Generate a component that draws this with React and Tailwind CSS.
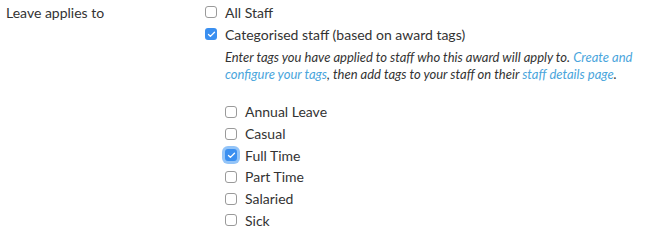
import { Check } from 'lucide-react'

const TAGS = [
  { name: 'Annual Leave', checked: false },
  { name: 'Casual', checked: false },
  { name: 'Full Time', checked: true, focus: true },
  { name: 'Part Time', checked: false },
  { name: 'Salaried', checked: false },
  { name: 'Sick', checked: false },
]

function Box({ checked, focus }) {
  if (checked) {
    return (
      <span
        className={`w-[12px] h-[12px] rounded-[3px] bg-[#3a8ff0] flex items-center justify-center shrink-0 ${
          focus ? 'ring-[3px] ring-[#93c4f8]' : ''
        }`}
      >
        <Check size={9} strokeWidth={3.5} className="text-white" />
      </span>
    )
  }
  return <span className="w-[12px] h-[12px] rounded-[3px] border border-[#9a9a9a] bg-white shrink-0" />
}

function Option({ label, checked, focus, h = 'h-[22px]' }) {
  return (
    <label className={`flex items-center gap-[8px] ${h}`}>
      <Box checked={checked} focus={focus} />
      <span>{label}</span>
    </label>
  )
}

export default function App() {
  return (
    <div
      className="w-[656px] h-[243px] bg-white text-[#333] text-[14px] flex"
      style={{ fontFamily: 'Lato, "Open Sans", sans-serif' }}
    >
      <div className="w-[205px] shrink-0 pl-[6px] pt-[2px] leading-[22px]">Leave applies to</div>

      <div className="pt-[1px] flex flex-col">
        <Option label="All Staff" />
        <Option label="Categorised staff (based on award tags)" checked />

        <div className="pl-[20px]">
          <p className="italic text-[13px] leading-[17px] pt-[4px] w-[414px]">
            Enter tags you have applied to staff who this award will apply to.{' '}
            <a className="text-[#4aa5dc]">Create and configure your tags</a>, then add tags to your staff on their{' '}
            <a className="text-[#4aa5dc]">staff details page</a>.
          </p>

          <div className="pt-[18px] flex flex-col">
            {TAGS.map(t => (
              <Option key={t.name} label={t.name} checked={t.checked} focus={t.focus} h="h-[21.7px]" />
            ))}
          </div>
        </div>
      </div>
    </div>
  )
}
